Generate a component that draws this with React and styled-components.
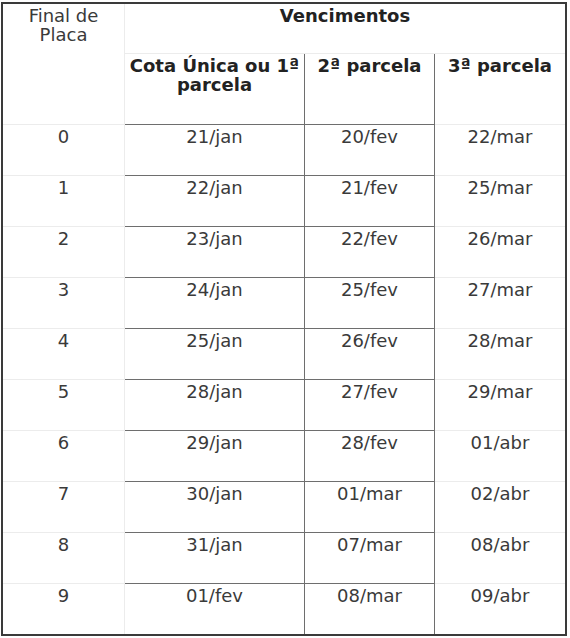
import React from 'react';
import styled, { createGlobalStyle } from 'styled-components';

const GlobalStyle = createGlobalStyle`
    body {
        margin: 0;
        background: #ffffff;
        font-family: "DejaVu Sans", Verdana, sans-serif;
    }
`;

// 표 전체
const Table = styled.div`
    display: grid;
    grid-template-columns: 122px 180px 130px 130px;
    grid-template-rows: 50px 71px repeat(9, 51px) 50px;
    width: 566px;
    margin: 2px 0 0 1px;
    border: 2px solid #3a3a3a;
    box-sizing: border-box;
    background: #fff;
`;

const LIGHT = '#ececec';
const DARK = '#6e6e6e';

// 셀
const Cell = styled.div`
    box-sizing: border-box;
    padding: 2px 4px 0;
    text-align: center;
    font-size: 18px;
    line-height: 19px;
    color: ${(p) => (p.$bold ? '#222' : '#3a3a3a')};
    font-weight: ${(p) => (p.$bold ? 700 : 400)};
    grid-column: ${(p) => p.$col || 'auto'};
    grid-row: ${(p) => p.$row || 'auto'};
    border-right: ${(p) => (p.$right ? `1px solid ${p.$right}` : 'none')};
    border-bottom: ${(p) => (p.$bottom ? `1px solid ${p.$bottom}` : 'none')};
`;

const rows = [
    ['0', '21/jan', '20/fev', '22/mar'],
    ['1', '22/jan', '21/fev', '25/mar'],
    ['2', '23/jan', '22/fev', '26/mar'],
    ['3', '24/jan', '25/fev', '27/mar'],
    ['4', '25/jan', '26/fev', '28/mar'],
    ['5', '28/jan', '27/fev', '29/mar'],
    ['6', '29/jan', '28/fev', '01/abr'],
    ['7', '30/jan', '01/mar', '02/abr'],
    ['8', '31/jan', '07/mar', '08/abr'],
    ['9', '01/fev', '08/mar', '09/abr'],
];

export default function App() {
    return (
        <>
            <GlobalStyle />
            <Table>
                {/* 헤더 */}
                <Cell $col="1" $row="1 / span 2" $right={LIGHT} $bottom={LIGHT}>
                    Final de<br />Placa
                </Cell>
                <Cell $col="2 / span 3" $row="1" $bottom={LIGHT} $bold>
                    Vencimentos
                </Cell>
                <Cell $right={DARK} $bottom={DARK} $bold>
                    Cota Única ou 1ª parcela
                </Cell>
                <Cell $right={DARK} $bottom={DARK} $bold>
                    2ª parcela
                </Cell>
                <Cell $bottom={LIGHT} $bold>
                    3ª parcela
                </Cell>

                {/* 본문 */}
                {rows.map((r, i) => {
                    const last = i === rows.length - 1;
                    return (
                        <React.Fragment key={r[0]}>
                            <Cell $right={LIGHT} $bottom={last ? null : LIGHT}>{r[0]}</Cell>
                            <Cell $right={DARK} $bottom={last ? null : DARK}>{r[1]}</Cell>
                            <Cell $right={DARK} $bottom={last ? null : DARK}>{r[2]}</Cell>
                            <Cell $bottom={last ? null : LIGHT}>{r[3]}</Cell>
                        </React.Fragment>
                    );
                })}
            </Table>
        </>
    );
}
